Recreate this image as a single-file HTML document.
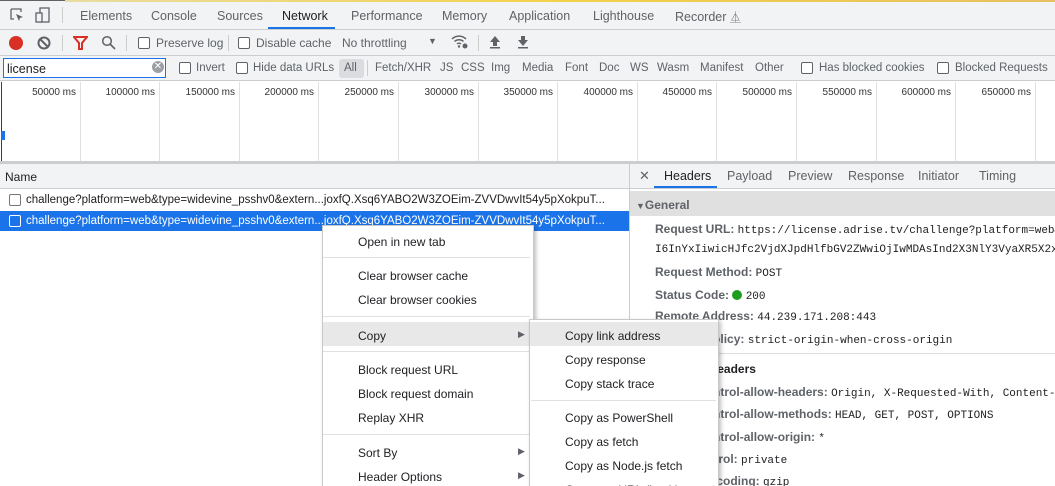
<!DOCTYPE html>
<html><head><style>
*{margin:0;padding:0;box-sizing:border-box}
html,body{overflow:hidden}
body{width:1055px;height:486px;background:#fff;font-family:"Liberation Sans",sans-serif;font-size:12px;color:#202124;position:relative}
.a{position:absolute;white-space:nowrap}
.g{color:#5f6368}
.cb{position:absolute;width:12px;height:12px;border:1px solid #5f6368;border-radius:2px;background:#fff}
.mono{font-family:"Liberation Mono",monospace;font-size:11px}
.b{font-weight:bold;color:#5f6368}
.f{position:absolute;top:61px;height:14px;line-height:14px;color:#5f6368;font-size:11.5px;white-space:nowrap}
</style></head><body>
<div class="a" style="left:0;top:0;width:1055px;height:30px;background:#f1f3f4;border-bottom:1px solid #cbcdd1"></div>
<div class="a" style="left:0;top:0;width:65px;height:1px;background:#5f6368"></div>
<div class="a" style="left:65px;top:0;width:990px;height:2px;background:linear-gradient(90deg,#e8dca0,#f3d24a,#e8c060)"></div>
<svg class="a" style="left:9px;top:7px" width="16" height="16" viewBox="0 0 16 16"><path d="M2 2h10v3M2 2v10h3" fill="none" stroke="#5f6368" stroke-width="1.3"/><path d="M7 7l7 3-3 1-1 3z" fill="#5f6368"/></svg>
<svg class="a" style="left:35px;top:7px" width="16" height="16" viewBox="0 0 16 16"><rect x="5" y="1" width="9" height="14" fill="none" stroke="#5f6368" stroke-width="1.3"/><rect x="1" y="6" width="6" height="9" fill="#f1f3f4" stroke="#5f6368" stroke-width="1.3"/></svg>
<div class="a" style="left:62px;top:7px;width:1px;height:16px;background:#ccc"></div>
<div class="a g" style="left:80px;top:9px;font-size:12.5px">Elements</div>
<div class="a g" style="left:151px;top:9px;font-size:12.5px">Console</div>
<div class="a g" style="left:217px;top:9px;font-size:12.5px">Sources</div>
<div class="a" style="left:282px;top:9px;font-size:12.5px;color:#202124">Network</div>
<div class="a" style="left:268px;top:27px;width:67px;height:2px;background:#1a73e8"></div>
<div class="a g" style="left:351px;top:9px;font-size:12.5px">Performance</div>
<div class="a g" style="left:442px;top:9px;font-size:12.5px">Memory</div>
<div class="a g" style="left:509px;top:9px;font-size:12.5px">Application</div>
<div class="a g" style="left:593px;top:9px;font-size:12.5px">Lighthouse</div>
<div class="a g" style="left:675px;top:9px;font-size:12.5px">Recorder <span style="font-size:11px">⏅</span></div>

<div class="a" style="left:0;top:30px;width:1055px;height:26px;background:#f1f3f4;border-bottom:1px solid #cbcdd1"></div>
<div class="a" style="left:9px;top:36px;width:14px;height:14px;border-radius:50%;background:#d93025"></div>
<svg class="a" style="left:37px;top:36px" width="14" height="14" viewBox="0 0 14 14"><circle cx="7" cy="7" r="5.5" fill="none" stroke="#5f6368" stroke-width="2"/><path d="M3 3l8 8" stroke="#5f6368" stroke-width="2"/></svg>
<div class="a" style="left:62px;top:35px;width:1px;height:16px;background:#ccc"></div>
<svg class="a" style="left:73px;top:36px" width="15" height="14" viewBox="0 0 15 14"><path d="M1 1h13L9 7v6H6V7z" fill="none" stroke="#d93025" stroke-width="2"/></svg>
<svg class="a" style="left:101px;top:35px" width="15" height="15" viewBox="0 0 15 15"><circle cx="6" cy="6" r="4.3" fill="none" stroke="#5f6368" stroke-width="1.5"/><path d="M9 9l5 5" stroke="#5f6368" stroke-width="1.6"/></svg>
<div class="a" style="left:126px;top:35px;width:1px;height:16px;background:#ccc"></div>
<div class="cb" style="left:138px;top:37px"></div>
<div class="a g" style="left:156px;top:36px;font-size:12px">Preserve log</div>
<div class="a" style="left:228px;top:35px;width:1px;height:16px;background:#ccc"></div>
<div class="cb" style="left:238px;top:37px"></div>
<div class="a g" style="left:256px;top:36px;font-size:12px">Disable cache</div>
<div class="a g" style="left:342px;top:36px;font-size:12px">No throttling</div>
<div class="a g" style="left:428px;top:36px;font-size:9px">▼</div>
<svg class="a" style="left:451px;top:34px" width="18" height="16" viewBox="0 0 18 16"><path d="M1 5a10 10 0 0 1 14 0M3.5 7.5a6.5 6.5 0 0 1 9 0M6 10a3 3 0 0 1 4 0" fill="none" stroke="#5f6368" stroke-width="1.5"/><circle cx="8" cy="12.5" r="1.2" fill="#5f6368"/><circle cx="14" cy="12" r="2.5" fill="#5f6368"/></svg>
<div class="a" style="left:478px;top:35px;width:1px;height:16px;background:#ccc"></div>
<svg class="a" style="left:489px;top:35px" width="12" height="14" viewBox="0 0 12 14"><path d="M6 1l5 6H8v4H4V7H1z M1 12h10v1.5H1z" fill="#5f6368"/></svg>
<svg class="a" style="left:517px;top:35px" width="12" height="14" viewBox="0 0 12 14"><path d="M6 11l5-6H8V1H4v4H1z M1 12h10v1.5H1z" fill="#5f6368"/></svg>

<div class="a" style="left:0;top:56px;width:1055px;height:25px;background:#f1f3f4;border-bottom:1px solid #cbcdd1"></div>
<div class="a" style="left:3px;top:58px;width:163px;height:20px;background:#fff;border:1px solid #1a73e8"></div>
<div class="a" style="left:7px;top:62px;font-size:12.5px">license</div>
<div class="a" style="left:152px;top:61px;width:12px;height:12px;border-radius:50%;background:#9aa0a6;color:#fff;font-size:10px;line-height:12px;text-align:center">✕</div>
<div class="cb" style="left:179px;top:62px"></div>
<div class="f" style="left:196px">Invert</div>
<div class="cb" style="left:236px;top:62px"></div>
<div class="f" style="left:253px">Hide data URLs</div>
<div class="a" style="left:339px;top:59px;width:25px;height:19px;background:#dadce0;border-radius:3px"></div>
<div class="f" style="left:344px">All</div>
<div class="a" style="left:367px;top:60px;width:1px;height:16px;background:#ccc"></div>
<div class="f" style="left:375px">Fetch/XHR</div>
<div class="f" style="left:440px">JS</div>
<div class="f" style="left:461px">CSS</div>
<div class="f" style="left:491px">Img</div>
<div class="f" style="left:522px">Media</div>
<div class="f" style="left:565px">Font</div>
<div class="f" style="left:599px">Doc</div>
<div class="f" style="left:630px">WS</div>
<div class="f" style="left:657px">Wasm</div>
<div class="f" style="left:700px">Manifest</div>
<div class="f" style="left:755px">Other</div>
<div class="cb" style="left:801px;top:62px"></div>
<div class="f" style="left:819px">Has blocked cookies</div>
<div class="cb" style="left:937px;top:62px"></div>
<div class="f" style="left:955px">Blocked Requests</div>

<div class="a" style="left:0;top:82px;width:1055px;height:79px;background:#fff"></div>
<div id="tl"></div>
<div class="a" style="left:1px;top:82px;width:1px;height:79px;background:#c00"></div>
<div class="a" style="left:1px;top:131px;width:4px;height:9px;background:#1a73e8"></div>
<div class="a" style="left:0;top:161px;width:1055px;height:3px;background:#cbcdd1"></div>

<div class="a" style="left:0;top:164px;width:629px;height:25px;background:#f1f3f4;border-bottom:1px solid #cbcdd1"></div>
<div class="a" style="left:5px;top:170px">Name</div>
<div class="a" style="left:629px;top:164px;width:1px;height:322px;background:#cbcdd1"></div>
<div class="a" style="left:0;top:190px;width:629px;height:21px;overflow:hidden">
<div class="cb" style="left:9px;top:4px;border-color:#777"></div>
<div class="a" style="left:26px;top:4px;font-size:11.5px">challenge?platform=web&amp;type=widevine_psshv0&amp;extern...joxfQ.Xsq6YABO2W3ZOEim-ZVVDwvIt54y5pXokpuT...</div></div>
<div class="a" style="left:0;top:211px;width:629px;height:20px;background:#1a73e8;overflow:hidden">
<div class="cb" style="left:9px;top:4px;border-color:#fff;background:#1a73e8"></div>
<div class="a" style="left:26px;top:4px;font-size:11.5px;color:#fff">challenge?platform=web&amp;type=widevine_psshv0&amp;extern...joxfQ.Xsq6YABO2W3ZOEim-ZVVDwvIt54y5pXokpuT...</div></div>

<div class="a" style="left:630px;top:164px;width:425px;height:322px;overflow:hidden">
<div class="a" style="left:0;top:0;width:425px;height:25px;background:#f1f3f4;border-bottom:1px solid #cbcdd1"></div>
<div class="a g" style="left:9px;top:4px;font-size:13px">✕</div>
<div class="a" style="left:34px;top:5px;font-size:12.5px">Headers</div>
<div class="a" style="left:24px;top:22px;width:63px;height:2px;background:#1a73e8"></div>
<div class="a g" style="left:97px;top:5px;font-size:12.5px">Payload</div>
<div class="a g" style="left:158px;top:5px;font-size:12.5px">Preview</div>
<div class="a g" style="left:218px;top:5px;font-size:12.5px">Response</div>
<div class="a g" style="left:288px;top:5px;font-size:12.5px">Initiator</div>
<div class="a g" style="left:349px;top:5px;font-size:12.5px">Timing</div>
<div class="a" style="left:0;top:27px;width:425px;height:25px;background:#e0e0e0"></div>
<div class="a b" style="left:6px;top:34px"><span style="font-size:9px">▼</span>General</div>
<div class="a" style="left:25px;top:58px"><span class="b">Request URL: </span><span class="mono">https://license.adrise.tv/challenge?platform=web&amp;type</span></div>
<div class="a mono" style="left:25px;top:80px">I6InYxIiwicHJfc2VjdXJpdHlfbGV2ZWwiOjIwMDAsInd2X3NlY3VyaXR5X2xldmVs</div>
<div class="a" style="left:25px;top:101px"><span class="b">Request Method: </span><span class="mono">POST</span></div>
<div class="a" style="left:25px;top:124px"><span class="b">Status Code: </span><span style="display:inline-block;width:10px;height:10px;border-radius:50%;background:#1e9e1e;vertical-align:-1px"></span> <span class="mono">200</span></div>
<div class="a" style="left:25px;top:145px"><span class="b">Remote Address: </span><span class="mono">44.239.171.208:443</span></div>
<div class="a" style="left:25px;top:168px"><span class="b">Referrer Policy: </span><span class="mono">strict-origin-when-cross-origin</span></div>
<div class="a" style="left:0;top:189px;width:425px;height:1px;background:#dadce0"></div>
<div class="a" style="left:6px;top:198px;font-weight:bold;color:#202124">▼Response Headers</div>
<div class="a" style="left:25px;top:221px"><span class="b">access-control-allow-headers: </span><span class="mono">Origin, X-Requested-With, Content-Type</span></div>
<div class="a" style="left:25px;top:243px"><span class="b">access-control-allow-methods: </span><span class="mono">HEAD, GET, POST, OPTIONS</span></div>
<div class="a" style="left:25px;top:266px"><span class="b">access-control-allow-origin: </span><span class="mono">*</span></div>
<div class="a" style="left:25px;top:288px"><span class="b">cache-control: </span><span class="mono">private</span></div>
<div class="a" style="left:25px;top:310px"><span class="b">content-encoding: </span><span class="mono">gzip</span></div>
</div>

<div class="a" style="left:322px;top:225px;width:212px;height:261px;background:#fff;border:1px solid #c8c8c8;border-bottom:none;box-shadow:2px 2px 4px rgba(0,0,0,.25)"></div>
<div class="a" style="left:358px;top:235px">Open in new tab</div>
<div class="a" style="left:323px;top:257px;width:207px;height:1px;background:#e0e0e0"></div>
<div class="a" style="left:358px;top:269px">Clear browser cache</div>
<div class="a" style="left:358px;top:293px">Clear browser cookies</div>
<div class="a" style="left:323px;top:316px;width:207px;height:1px;background:#e0e0e0"></div>
<div class="a" style="left:323px;top:322px;width:210px;height:24px;background:#e8e8e8"></div>
<div class="a" style="left:358px;top:329px">Copy</div>
<div class="a g" style="left:518px;top:329px;font-size:9px">▶</div>
<div class="a" style="left:323px;top:351px;width:207px;height:1px;background:#e0e0e0"></div>
<div class="a" style="left:358px;top:363px">Block request URL</div>
<div class="a" style="left:358px;top:387px">Block request domain</div>
<div class="a" style="left:358px;top:411px">Replay XHR</div>
<div class="a" style="left:323px;top:434px;width:207px;height:1px;background:#e0e0e0"></div>
<div class="a" style="left:358px;top:446px">Sort By</div>
<div class="a g" style="left:518px;top:446px;font-size:9px">▶</div>
<div class="a" style="left:358px;top:470px">Header Options</div>
<div class="a g" style="left:518px;top:470px;font-size:9px">▶</div>

<div class="a" style="left:529px;top:319px;width:190px;height:167px;background:#fff;border:1px solid #c8c8c8;border-bottom:none;box-shadow:2px 2px 4px rgba(0,0,0,.25);overflow:hidden">
<div class="a" style="left:0;top:2px;width:188px;height:24px;background:#e8e8e8"></div>
<div class="a" style="left:35px;top:9px">Copy link address</div>
<div class="a" style="left:35px;top:33px">Copy response</div>
<div class="a" style="left:35px;top:57px">Copy stack trace</div>
<div class="a" style="left:1px;top:80px;width:185px;height:1px;background:#e0e0e0"></div>
<div class="a" style="left:35px;top:91px">Copy as PowerShell</div>
<div class="a" style="left:35px;top:115px">Copy as fetch</div>
<div class="a" style="left:35px;top:139px">Copy as Node.js fetch</div>
<div class="a" style="left:35px;top:163px">Copy as cURL (bash)</div>
</div>
<script>
var s='';for(var i=1;i<=13;i++){var x=Math.round(i*79.6);s+='<div class="a" style="left:'+x+'px;top:82px;width:1px;height:79px;background:#e0e0e0"></div><div class="a" style="left:'+(x-80)+'px;top:87px;width:76px;text-align:right;font-size:10px;color:#333">'+(i*50000)+' ms</div>';}
document.getElementById('tl').innerHTML=s;
</script>
</body></html>
